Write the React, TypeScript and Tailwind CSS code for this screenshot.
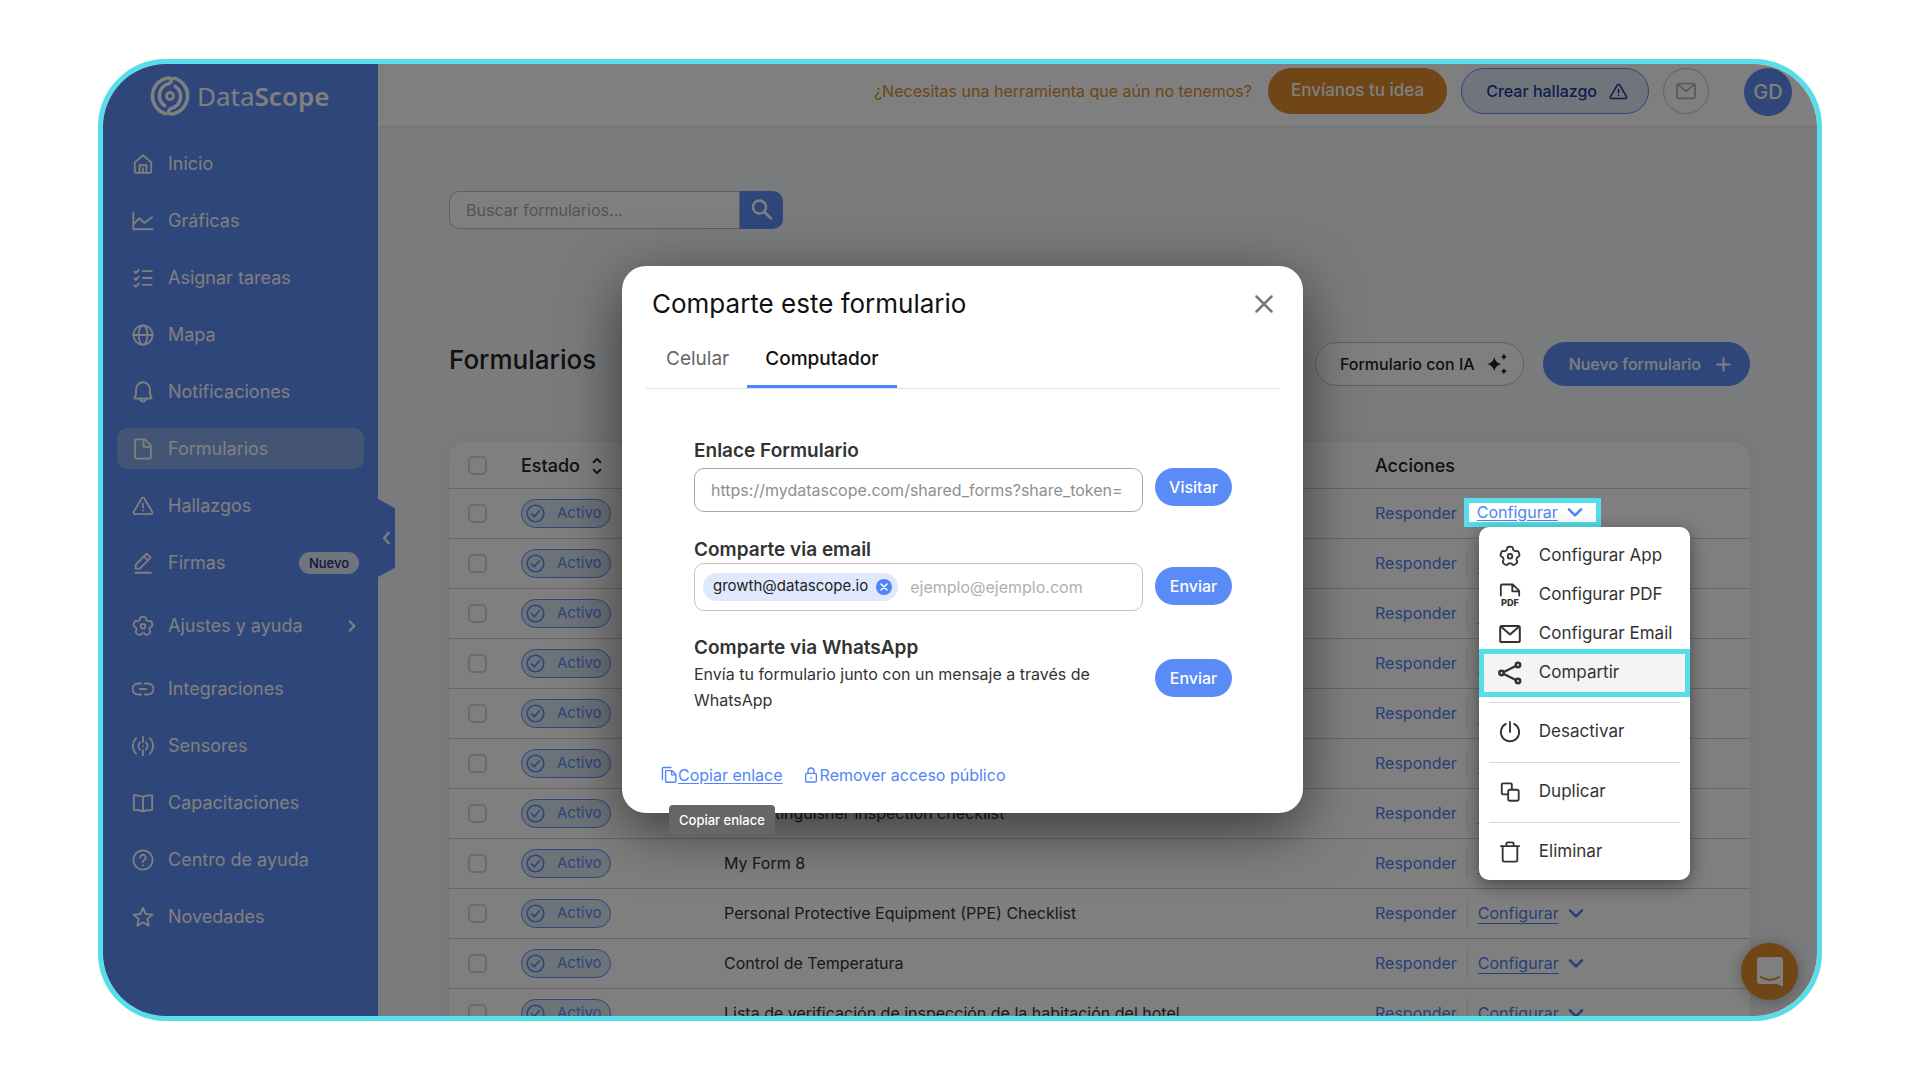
import type { ReactNode } from "react";

const FONT = "font-['Inter','Liberation_Sans',sans-serif]";

function Icon({
  children,
  className = "size-6",
  weight = 2,
}: {
  children: ReactNode;
  className?: string;
  weight?: number;
}) {
  return (
    <svg
      viewBox="0 0 24 24"
      fill="none"
      stroke="currentColor"
      strokeWidth={weight}
      strokeLinecap="round"
      strokeLinejoin="round"
      className={`shrink-0 ${className}`}
      aria-hidden="true"
    >
      {children}
    </svg>
  );
}

// Five-lobed gear outline, sampled from a rounded cosine wave.
function gearPath() {
  const points: string[] = [];
  for (let i = 0; i < 120; i++) {
    const t = (i / 120) * Math.PI * 2;
    const r = 9 + 1.4 * Math.tanh(2.4 * (Math.cos(5 * t) + 0.25));
    points.push(`${(12 + r * Math.sin(t)).toFixed(2)} ${(12.3 - r * Math.cos(t)).toFixed(2)}`);
  }
  return `M${points.join("L")}Z`;
}

const GEAR = gearPath();

const gear = (
  <>
    <path d={GEAR} />
    <circle cx="12" cy="12.3" r="2.5" />
  </>
);
const warning = (
  <>
    <path d="M10.6 3.6 1.9 18.4a1.6 1.6 0 0 0 1.4 2.4h17.4a1.6 1.6 0 0 0 1.4-2.4L13.4 3.6a1.6 1.6 0 0 0-2.8 0Z" />
    <path d="M12 9.5v4M12 16.7v.2" />
  </>
);
const envelope = (
  <>
    <rect x="2.2" y="4" width="19.6" height="16" rx="1.6" />
    <path d="m3.4 5 8.6 7.4L20.6 5" />
  </>
);
const chevronDown = <path d="m4 8.5 8 8 8-8" />;

type NavItem = { label: string; icon: ReactNode; active?: boolean; badge?: string; arrow?: boolean };

const NAV: NavItem[] = [
  {
    label: "Inicio",
    icon: <path d="M3 10.2V20a1.6 1.6 0 0 0 1.6 1.6h14.8A1.6 1.6 0 0 0 21 20v-9.8L12 2.4ZM8.2 21.4v-8h7.6v8M12 16.500v5" />,
  },
  { label: "Gráficas", icon: <path d="M1.5 3v18h21M2.5 14.5 8 9l5.5 5L22 8" /> },
  {
    label: "Asignar tareas",
    icon: <path d="M12 4.5h9.5M12 12h9.5M12 19.5h9.5M2.5 5l1.6 1.6L7.5 3M2.5 12.5l1.6 1.6 3.4-3.6M2.5 20l1.6 1.6L7.5 18" />,
  },
  {
    label: "Mapa",
    icon: (
      <>
        <circle cx="12" cy="12" r="10.5" />
        <ellipse cx="12" cy="12" rx="4.8" ry="10.5" />
        <path d="M1.5 12h21" />
      </>
    ),
  },
  {
    label: "Notificaciones",
    icon: (
      <path d="M12 1.4a7.6 7.6 0 0 0-7.6 7.6v5.6L2.6 18a.7.7 0 0 0 .6 1.1h17.6a.7.7 0 0 0 .6-1.1l-1.8-3.4V9A7.6 7.6 0 0 0 12 1.4ZM9 19.4a3 3 0 0 0 6 0" />
    ),
  },
  {
    label: "Formularios",
    active: true,
    icon: <path d="M4.6 1.5h9.4l6.6 6.6V21a1.5 1.5 0 0 1-1.5 1.5H4.9A1.5 1.5 0 0 1 3.4 21V2.7a1.2 1.2 0 0 1 1.2-1.2ZM12.6 1.8v7.8h7.8" />,
  },
  { label: "Hallazgos", icon: warning },
  {
    label: "Firmas",
    badge: "Nuevo",
    icon: <path d="M3.6 22.6h17M4 18.2v-4.4L16 1.8l4.4 4.4-12 12ZM13 4.8l4.4 4.4" />,
  },
  { label: "Ajustes y ayuda", arrow: true, icon: gear },
  {
    label: "Integraciones",
    icon: <path d="M10 6H6.5a6 6 0 0 0 0 12H10M14 6h3.5a6 6 0 0 1 0 12H14M8.5 12h7" />,
  },
  {
    label: "Sensores",
    icon: (
      <path d="M12 2v5.5M12 16.5V22M12 11.9v.2M8.8 8a5.5 5.5 0 0 0 0 8M15.2 8a5.5 5.5 0 0 1 0 8M4.5 3.5a12 12 0 0 0 0 17M19.5 3.5a12 12 0 0 1 0 17" />
    ),
  },
  {
    label: "Capacitaciones",
    icon: <path d="M12 5.2C9 3.8 6 3.4 2 3.4v16.2c4 0 7 .3 10 1.5 3-1.2 6-1.5 10-1.5V3.4c-4 0-7 .4-10 1.8Zm0 0v15.900" />,
  },
  {
    label: "Centro de ayuda",
    icon: (
      <>
        <circle cx="12" cy="12" r="10.5" />
        <path d="M9 9.3a3 3 0 1 1 4.4 2.7c-1 .6-1.4 1.1-1.4 2.3M12 17.6v.1" />
      </>
    ),
  },
  {
    label: "Novedades",
    icon: <path d="m12 2 2.9 6.7 7.3.7-5.5 4.9 1.6 7.2-6.300-3.800-6.300 3.800 1.600-7.200-5.500-4.900 7.300-.7Z" />,
  },
];

function Logo() {
  return (
    <a href="#inicio" className="ml-[47px] flex items-center gap-[7px] text-white" aria-label="DataScope">
      <svg viewBox="0 0 120 120" className="size-10" fill="none" stroke="currentColor" strokeWidth="10.500" strokeLinecap="round" aria-hidden="true">
        <path d="M48 113.500A55 55 0 0 1 54 6C66 5 68 17 56 23A37 37 0 0 0 44 89" />
        <path d="M72 6.500A55 55 0 0 1 66 114C54 115 52 103 64 97A37 37 0 0 0 76 31" />
        <circle cx="60" cy="60" r="10.500" strokeWidth="8.500" />
      </svg>
      <span className="font-['Noto_Sans','Open_Sans',sans-serif] text-[26px] leading-9">
        <span className="font-normal">Data</span>
        <span className="font-semibold">Scope</span>
      </span>
    </a>
  );
}

function Sidebar() {
  return (
    <aside className="relative flex w-[275px] shrink-0 flex-col bg-[#5c8cf5] pt-3 text-white">
      <Logo />
      <nav className="mt-[27px] flex flex-col gap-4 px-3.5" aria-label="Principal">
        {NAV.map((item) => (
          <a
            key={item.label}
            href="#menu"
            className={`flex h-[41px] items-center rounded-[10px] pr-[5px] pl-[15px] text-[18px] ${
              item.active ? "bg-[#86a8ea]" : ""
            } ${item.arrow ? "my-1.5" : ""}`}
          >
            <Icon className="size-[22px]">{item.icon}</Icon>
            <span className="ml-3.5">{item.label}</span>
            {item.badge && (
              <span className="ml-auto rounded-full bg-[#e0ebf8] px-2.5 py-[3px] text-[13px] leading-4 font-medium text-[#1f2c7c]">
                {item.badge}
              </span>
            )}
            {item.arrow && (
              <Icon className="ml-auto size-3.5" weight={3.500}>
                <path d="m8 4 8 8-8 8" />
              </Icon>
            )}
          </a>
        ))}
      </nav>
      <button
        type="button"
        aria-label="Contraer menú"
        className="absolute top-[435px] left-full flex h-[78px] w-[17px] items-center justify-center bg-[#5c8cf5] [clip-path:polygon(0_0,100%_12%,100%_88%,0_100%)]"
      >
        <Icon className="size-3.5" weight={4}>
          <path d="m15 3-8 9 8 9" />
        </Icon>
      </button>
    </aside>
  );
}

function TopBar() {
  return (
    <header className="flex h-16 shrink-0 items-start justify-end border-b-2 border-[#ececec] bg-white pt-1 pr-[25px] text-[16px]">
      <p className="mr-4 flex h-[46px] items-center text-[#e08c2c]">¿Necesitas una herramienta que aún no tenemos?</p>
      <button type="button" className="mr-3.5 h-[46px] rounded-full bg-[#e08c2c] px-[23px] text-[17px] font-medium text-white">
        Envíanos tu idea
      </button>
      <button
        type="button"
        className="mr-3.5 flex h-[46px] items-center gap-3 rounded-full border border-[#5c8cf5] bg-[#e0ebf8] pr-5 pl-6 font-medium text-[#26389c]"
      >
        Crear hallazgo
        <Icon className="size-[19px]">{warning}</Icon>
      </button>
      <button
        type="button"
        aria-label="Mensajes"
        className="mr-[35px] flex size-[46px] items-center justify-center rounded-full border border-[#c4c4c4] text-[#b4b4b4]"
      >
        <Icon className="size-[22px]">{envelope}</Icon>
      </button>
      <button type="button" className="size-12 rounded-full bg-[#5c8cf5] text-[20px] font-medium text-white">
        GD
      </button>
    </header>
  );
}

const FORMS = [
  "",
  "",
  "",
  "",
  "",
  "",
  "Fire extinguisher inspection checklist",
  "My Form 8",
  "Personal Protective Equipment (PPE) Checklist",
  "Control de Temperatura",
  "Lista de verificación de inspección de la habitación del hotel",
];

function Check({ label }: { label: string }) {
  return (
    <input
      type="checkbox"
      aria-label={label}
      className="block size-[19px] appearance-none rounded-[5px] border-2 border-[#d6d6d6] bg-white"
    />
  );
}

function ConfigMenu() {
  const item = "flex h-[39px] w-full items-center gap-[18px] pl-5 text-left";
  const rule = "mx-2.5 my-2.5 h-px border-0 bg-[#d9d9d9]";
  return (
    <div className="absolute top-full left-[15px] w-[211px] rounded-[10px] bg-white pt-2.5 pb-2 text-[17px] text-[#333] shadow-[0_5px_18px_rgba(0,0,0,0.45)]">
      <button type="button" className={item}>
        <Icon className="size-[22px]">{gear}</Icon>
        Configurar App
      </button>
      <button type="button" className={item}>
        <svg
          viewBox="0 0 24 24"
          className="size-[22px] shrink-0 overflow-visible"
          fill="none"
          stroke="currentColor"
          strokeWidth="2"
          strokeLinecap="round"
          strokeLinejoin="round"
          aria-hidden="true"
        >
          <path d="M2 12.500V2A1.500 1.500 0 0 1 3.500.500h11.500L22 7.500v5M14.500.8v7.200h7" />
          <text x="12" y="24.500" textAnchor="middle" fill="currentColor" stroke="none" fontSize="10" fontWeight="800">
            PDF
          </text>
        </svg>
        Configurar PDF
      </button>
      <button type="button" className={item}>
        <Icon className="-mx-px size-6">{envelope}</Icon>
        Configurar Email
      </button>
      <button
        type="button"
        className="-my-[5px] flex h-12 w-full items-center gap-[17px] border-5 border-[#56dfe8] bg-[#f4f4f4] pl-3.5 text-left"
      >
        <Icon className="size-6" weight={2.500}>
          <circle cx="3.500" cy="12" r="2.200" />
          <circle cx="20" cy="4" r="2.200" />
          <circle cx="20" cy="20" r="2.200" />
          <path d="m5.800 11 12-6M5.800 13l12 6" />
        </Icon>
        Compartir
      </button>
      <hr className={rule} />
      <button type="button" className={item}>
        <Icon className="size-[22px]">
          <path d="M12 1v11M7.500 3.200a10 10 0 1 0 9 0" />
        </Icon>
        Desactivar
      </button>
      <hr className={rule} />
      <button type="button" className={item}>
        <Icon className="size-[22px]">
          <path d="M9.500 14.500H4.500A1.500 1.500 0 0 1 3 13V4a1.500 1.500 0 0 1 1.500-1.500h8A1.500 1.500 0 0 1 14 4v5" />
          <rect x="10" y="9.500" width="11.500" height="12" rx="2" />
        </Icon>
        Duplicar
      </button>
      <hr className={rule} />
      <button type="button" className={item}>
        <Icon className="size-[22px]">
          <path d="M2 5.500h20M4 5.800V21a1.500 1.500 0 0 0 1.500 1.500h13A1.500 1.500 0 0 0 20 21V5.800M8 5.200V3a1.500 1.500 0 0 1 1.500-1.500h5A1.500 1.500 0 0 1 16 3v2.200" />
        </Icon>
        Eliminar
      </button>
    </div>
  );
}

function FormsTable() {
  return (
    <div className="rounded-[16px] bg-white shadow-[0_0_14px_rgba(0,0,0,0.06)]">
      <table className="w-full table-fixed text-left text-[16px] text-[#333]">
        <colgroup>
          <col className="w-[72px]" />
          <col className="w-[203px]" />
          <col />
          <col className="w-[375px]" />
        </colgroup>
        <thead>
          <tr className="h-[46px] border-b border-[#cfcfcf] text-[18px] text-[#222]">
            <th className="pt-0.5 pl-[19px]">
              <Check label="Seleccionar todos" />
            </th>
            <th className="pt-0.5 font-medium">
              <button type="button" className="flex items-center gap-2">
                Estado
                <Icon className="size-[18px]" weight={2.500}>
                  <path d="m7.500 7 4.500-4.500L16.500 7M7.500 17l4.500 4.500 4.500-4.500" />
                </Icon>
              </button>
            </th>
            <th />
            <th className="pt-0.5 font-medium">Acciones</th>
          </tr>
        </thead>
        <tbody>
          {FORMS.map((name, i) => (
            <tr key={i} className="h-[50px] border-b border-[#cfcfcf]">
              <td className="pl-[19px]">
                <Check label={`Seleccionar formulario ${i + 1}`} />
              </td>
              <td>
                <span className="flex h-[29px] w-[90px] items-center gap-3 rounded-full border border-[#5c8cf5] bg-[#d8e7f2] pl-1 text-[15px] text-[#5c8cf5]">
                  <Icon className="size-[19px]">
                    <circle cx="12" cy="12" r="10.500" />
                    <path d="m7 12.500 3.500 3.500L17 8.500" />
                  </Icon>
                  Activo
                </span>
              </td>
              <td className="truncate">{name}</td>
              <td>
                <div className="flex h-[29px] items-center text-[#4f80f0]">
                  <a href="#responder">Responder</a>
                  {i === 0 ? (
                    <div className="relative z-20 mb-0.5 ml-[7px]">
                      <button
                        type="button"
                        aria-expanded="true"
                        className="flex h-[29px] items-center gap-2 border-5 border-[#56dfe8] bg-white pr-3 pl-2 leading-5 text-[#4f86f7] underline underline-offset-2"
                      >
                        Configurar
                        <Icon className="size-[18px]" weight={3.500}>
                          {chevronDown}
                        </Icon>
                      </button>
                      <ConfigMenu />
                    </div>
                  ) : (
                    <button
                      type="button"
                      className="ml-2.5 flex h-[29px] items-center gap-2 border-l border-[#e2e2e2] pl-2.5 underline underline-offset-4"
                    >
                      Configurar
                      <Icon className="size-[18px]" weight={3.500}>
                        {chevronDown}
                      </Icon>
                    </button>
                  )}
                </div>
              </td>
            </tr>
          ))}
        </tbody>
      </table>
    </div>
  );
}

function Content() {
  return (
    <main className="flex-1 bg-[#f5f6fb] pt-[63px] pr-[67px] pl-[71px]">
      <form className="flex h-[38px] w-[334px]" role="search" onSubmit={(e) => e.preventDefault()}>
        <input
          type="search"
          aria-label="Buscar formularios"
          placeholder="Buscar formularios..."
          className="min-w-0 flex-1 rounded-l-[10px] border border-[#bdbdbd] bg-white pl-4 text-[16px] placeholder:text-[#a8a8a8]"
        />
        <button
          type="submit"
          aria-label="Buscar"
          className="flex w-[43px] items-center justify-center rounded-r-[10px] bg-[#5c8cf5] text-white"
        >
          <Icon className="size-6" weight={2.500}>
            <circle cx="9.500" cy="9" r="6.500" />
            <path d="m14.500 14 6.500 6.500" />
          </Icon>
        </button>
      </form>
      <div className="mt-[111px] flex items-start">
        <h1 className="text-[26px] leading-10 font-medium text-[#222]">Formularios</h1>
        <button
          type="button"
          className="mt-0.5 ml-auto flex h-11 items-center gap-[11px] rounded-full border border-[#c0c0c0] bg-white pr-[15px] pl-6 text-[16px] font-medium text-[#222]"
        >
          Formulario con IA
          <svg viewBox="0 0 24 24" className="size-[22px]" fill="currentColor" aria-hidden="true">
            <path d="M9 4.500q1.500 6 7.500 7.500-6 1.500-7.500 7.500-1.500-6-7.500-7.500 6-1.500 7.500-7.500ZM19.500.500q.7 2.800 3.500 3.500-2.800.7-3.500 3.500-.7-2.800-3.500-3.500 2.800-.7 3.500-3.500ZM19.500 16.500q.7 2.800 3.500 3.500-2.800.7-3.500 3.500-.7-2.800-3.500-3.500 2.800-.7 3.500-3.500Z" />
          </svg>
        </button>
        <button
          type="button"
          className="mt-0.5 ml-[19px] flex h-11 items-center gap-[13px] rounded-full bg-[#5c8cf5] pr-[17px] pl-[26px] text-[16px] font-medium text-white"
        >
          Nuevo formulario
          <Icon className="size-[19px]" weight={2.500}>
            <path d="M12 4v16M4 12h16" />
          </Icon>
        </button>
      </div>
      <div className="mt-14">
        <FormsTable />
      </div>
    </main>
  );
}

function PillButton({ children }: { children: ReactNode }) {
  return (
    <button type="button" className="h-[38px] w-[77px] shrink-0 rounded-full bg-[#5b8bf7] text-[16px] font-medium text-white">
      {children}
    </button>
  );
}

function ShareDialog() {
  return (
    <section
      role="dialog"
      aria-modal="true"
      aria-labelledby="share-title"
      className="w-[681px] rounded-[24px] bg-white px-6 pt-5 pb-[25px] text-[#333] shadow-[0_16px_60px_rgba(0,0,0,0.55)]"
    >
      <div className="flex items-center justify-between pr-[3px] pl-1.5">
        <h2 id="share-title" className="text-[26px] leading-9 text-[#111]">
          Comparte este formulario
        </h2>
        <button type="button" aria-label="Cerrar" className="text-[#777]">
          <Icon className="size-6" weight={2.500}>
            <path d="m4.500 4.500 15 15M19.500 4.500l-15 15" />
          </Icon>
        </button>
      </div>
      <div role="tablist" className="mt-4 flex border-b border-[#e0e0e0] pl-0.5 text-[19px]">
        <button type="button" role="tab" aria-selected="false" className="h-[50px] px-[18px] pb-1.5 text-[#666]">
          Celular
        </button>
        <button
          type="button"
          role="tab"
          aria-selected="true"
          className="h-[50px] border-b-3 border-[#4f86f7] px-[18px] pb-[3px] font-medium text-[#111]"
        >
          Computador
        </button>
      </div>
      <div className="mt-[49px] pr-[47px] pl-12">
        <label htmlFor="form-link" className="block text-[19px] leading-[26px] font-semibold">
          Enlace Formulario
        </label>
        <div className="mt-1 flex items-start gap-3">
          <input
            id="form-link"
            readOnly
            value="https://mydatascope.com/shared_forms?share_token="
            className="h-11 min-w-0 flex-1 rounded-[10px] border border-[#a8a8a8] px-4 text-[16px] text-[#8f8f8f]"
          />
          <PillButton>Visitar</PillButton>
        </div>
        <label htmlFor="form-email" className="mt-[25px] block text-[19px] leading-[26px] font-semibold">
          Comparte via email
        </label>
        <div className="flex items-start gap-3">
          <div className="flex h-12 min-w-0 flex-1 items-center rounded-[10px] border border-[#c4c4c4] pl-2">
            <span className="flex h-7 shrink-0 items-center gap-2 rounded-full bg-[#dfe8fd] pr-1.5 pl-2.5 text-[15px] text-[#222]">
              growth@datascope.io
              <button type="button" aria-label="Quitar correo" className="flex size-4 items-center justify-center rounded-full bg-[#4f86f7] text-white">
                <Icon className="size-3" weight={3}>
                  <path d="m6 6 12 12M18 6 6 18" />
                </Icon>
              </button>
            </span>
            <input
              id="form-email"
              type="email"
              placeholder="ejemplo@ejemplo.com"
              className="ml-3 min-w-0 flex-1 text-[16px] placeholder:text-[#b0b0b0]"
            />
          </div>
          <div className="mt-1">
            <PillButton>Enviar</PillButton>
          </div>
        </div>
        <div className="mt-6 flex items-center gap-3">
          <div className="min-w-0 flex-1">
            <h3 className="text-[19px] leading-[26px] font-semibold">Comparte via WhatsApp</h3>
            <p className="text-[16px] leading-[26px]">Envía tu formulario junto con un mensaje a través de WhatsApp</p>
          </div>
          <div className="mt-2">
            <PillButton>Enviar</PillButton>
          </div>
        </div>
      </div>
      <div className="mt-[49px] flex items-center gap-5 pl-[15px] text-[16px] leading-[26px] text-[#4f86f7]">
        <div className="relative">
          <button type="button" className="flex items-center underline underline-offset-2" aria-describedby="copy-tip">
            <Icon className="size-[17px]">
              <path d="M2 19V3.500A1.500 1.500 0 0 1 3.500 2H14M7.500 6.500h8L21 12v10a1 1 0 0 1-1 1H7.500a1 1 0 0 1-1-1V7.500a1 1 0 0 1 1-1ZM15 6.800v5.700h5.800" />
            </Icon>
            Copiar enlace
          </button>
          <span
            id="copy-tip"
            role="tooltip"
            className="absolute top-[43px] left-2 rounded-[4px] bg-[#666] px-2.5 py-1.5 text-[13px] leading-[18px] font-medium whitespace-nowrap text-white"
          >
            Copiar enlace
          </span>
        </div>
        <button type="button" className="flex items-center gap-px">
          <Icon className="size-4">
            <rect x="4" y="9.500" width="16" height="13" rx="1.500" />
            <path d="M7.500 9.500V6a4.500 4.500 0 0 1 9 0v3.500M12 15.500v1" />
          </Icon>
          Remover acceso público
        </button>
      </div>
    </section>
  );
}

export default function App() {
  return (
    <div className={`h-screen bg-white px-[98px] py-[59px] antialiased ${FONT}`}>
      <div className="relative flex h-full overflow-hidden rounded-[68px] border-5 border-[#56dfe8]">
        <Sidebar />
        <div className="flex min-w-0 flex-1 flex-col">
          <TopBar />
          <Content />
        </div>
        <button
          type="button"
          aria-label="Abrir chat"
          className="absolute right-[19px] bottom-4 flex size-[57px] items-center justify-center rounded-full bg-[#e08c2c] text-white shadow-[0_2px_16px_rgba(0,0,0,0.3)]"
        >
          <svg viewBox="0 0 28 32" className="h-8 w-7" aria-hidden="true">
            <path d="M4 1h20a3 3 0 0 1 3 3v26.500L21 28H4a3 3 0 0 1-3-3V4a3 3 0 0 1 3-3Z" fill="currentColor" />
            <path d="M5 21q9 6 18 0" fill="none" stroke="#e08c2c" strokeWidth="2" strokeLinecap="round" />
          </svg>
        </button>
        <div className="absolute inset-0 z-10 bg-black/50" />
        <div className="pointer-events-none absolute inset-0 z-10 flex items-center justify-center pb-0.5 pl-[5px]">
          <ShareDialog />
        </div>
      </div>
    </div>
  );
}
